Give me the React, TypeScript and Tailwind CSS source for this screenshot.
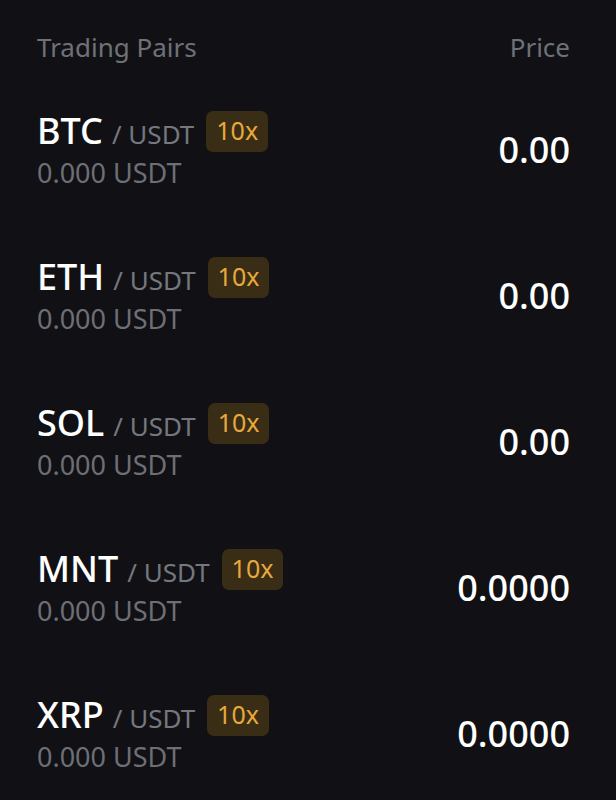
const pairs = [
  { base: "BTC", price: "0.00" },
  { base: "ETH", price: "0.00" },
  { base: "SOL", price: "0.00" },
  { base: "MNT", price: "0.0000" },
  { base: "XRP", price: "0.0000" },
];

export default function App() {
  return (
    <div
      className="min-h-[800px] w-full bg-[#111115] pl-[37px] pr-[46px]"
      style={{ fontFamily: '"Noto Sans", "Open Sans", sans-serif' }}
    >
      {/* Header */}
      <div className="flex justify-between h-[77px] pt-[30px] text-[26px] leading-[34px] text-[#6f7178]">
        <span>Trading Pairs</span>
        <span>Price</span>
      </div>

      {/* Rows */}
      {pairs.map((p) => (
        <div key={p.base} className="flex items-center justify-between h-[146px]">
          <div className="flex flex-col">
            <div className="flex items-baseline h-[42px]">
              <span className="text-[36px] leading-[42px] font-medium text-white">
                {p.base}
              </span>
              <span className="ml-[9px] text-[26px] leading-none text-[#75777e]">
                / USDT
              </span>
              <span className="ml-[12px] self-center h-[41px] px-[10px] flex items-center rounded-[7px] bg-[#392d16] text-[25px] text-[#e8a83b]">
                10x
              </span>
            </div>
            <span className="mt-[4px] text-[27px] leading-[34px] text-[#6d6f76]">
              0.000 USDT
            </span>
          </div>
          <span className="text-[36px] font-medium text-white">{p.price}</span>
        </div>
      ))}
    </div>
  );
}
